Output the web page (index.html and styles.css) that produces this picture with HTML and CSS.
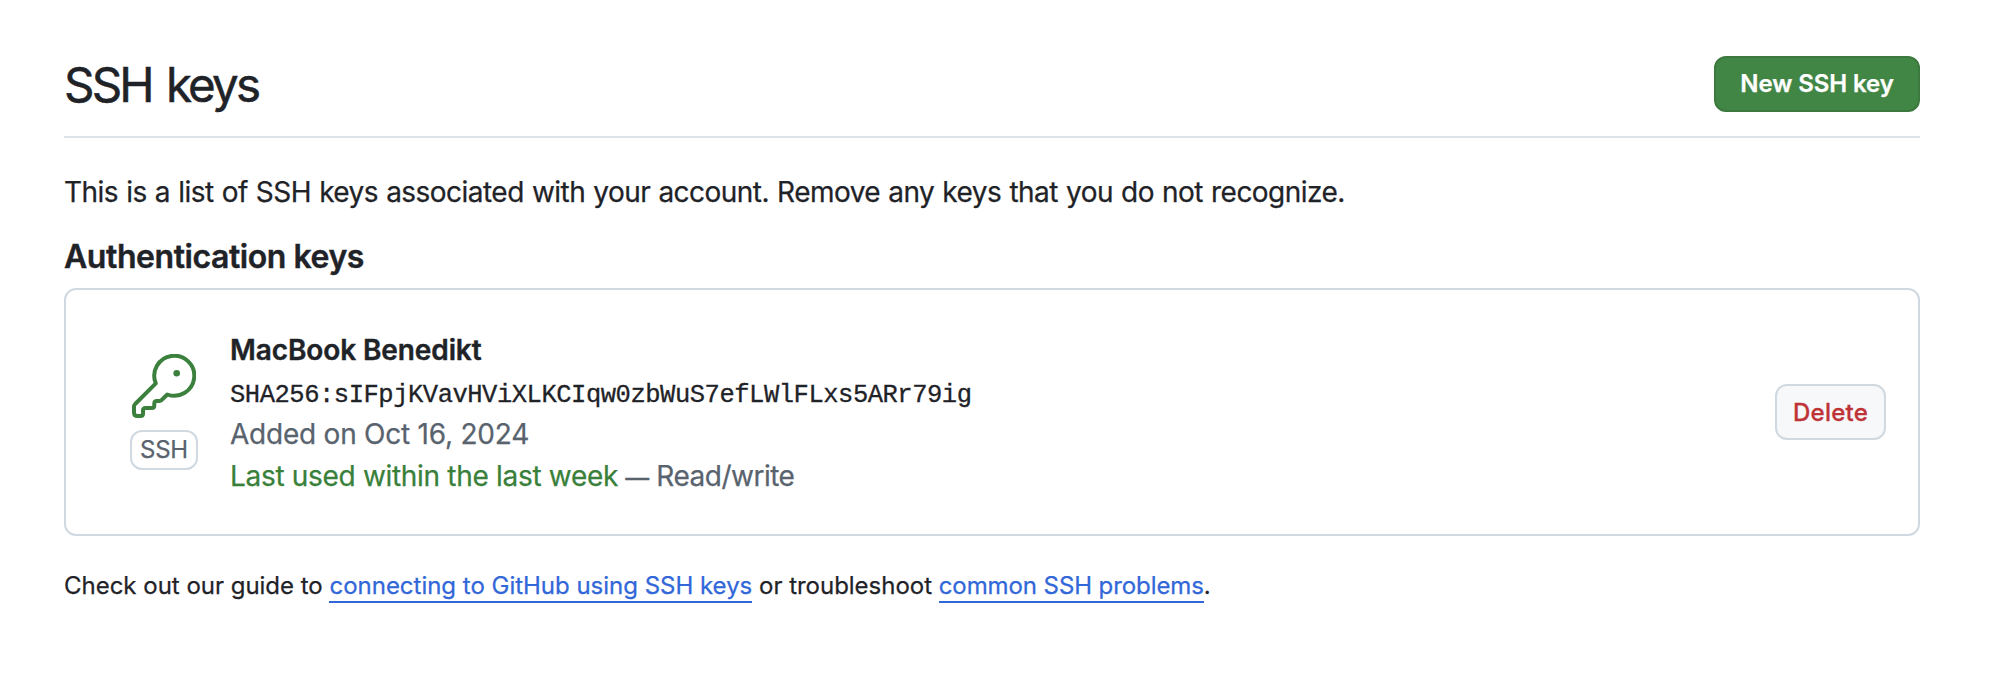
FILE: index.html
```html
<!DOCTYPE html>
<html lang="en">
<head>
<meta charset="utf-8">
<title>SSH keys</title>
<link rel="stylesheet" href="styles.css">
</head>
<body>
<main class="page">
  <header class="subhead">
    <h1 class="subhead-title">SSH keys</h1>
    <button class="btn btn-primary">New SSH key</button>
  </header>
  <p class="intro">This is a list of SSH keys associated with your account. Remove any keys that you do not recognize.</p>
  <h2 class="section-title">Authentication keys</h2>
  <section class="key-card">
    <div class="key-kind">
      <svg class="key-icon" viewBox="0 0 64 64" fill="none" aria-hidden="true">
        <path d="M23.8 29.4 3.2 50a3 3 0 0 0-1.2 2.3V58.500q0 3.500 3.500 3.500H8.500q2.500 0 2.500-2.500V56.500q0-2.500 2.500-2.500H19.800q2.500 0 2.500-2.500V49.500q0-2.500 2.500-2.500H27.500q1.200 0 2-.8L35.300 40.500A20 20 0 1 0 23.800 29.400Z" stroke="currentColor" stroke-width="4" stroke-linejoin="round"/>
        <circle cx="44.700" cy="19.200" r="3.300" fill="currentColor"/>
      </svg>
      <span class="key-label">SSH</span>
    </div>
    <div class="key-details">
      <strong class="key-name">MacBook Benedikt</strong>
      <code class="key-hash">SHA256:sIFpjKVavHViXLKCIqw0zbWuS7efLWlFLxs5ARr79ig</code>
      <span class="key-meta key-added">Added on Oct 16, 2024</span>
      <span class="key-meta key-usage"><span class="key-recent">Last used within the last week</span> <span class="dash">—</span> <span class="access">Read/write</span></span>
    </div>
    <button class="btn btn-danger">Delete</button>
  </section>
  <p class="help">Check out our guide to <a class="help-link" href="#">connecting to GitHub using SSH keys</a> or troubleshoot <a class="help-link help-link-problems" href="#">common SSH problems</a>.</p>
</main>
</body>
</html>
```
FILE: styles.css
```css
*{box-sizing:border-box}
body{margin:0;background:#fff;color:#1f2328;font-family:Inter,"Noto Sans",sans-serif;font-size:28px;font-weight:400;line-height:42px;-webkit-text-stroke:.25px}
.page{padding:56px 86px 0 64px}
h1,h2,p{margin:0}
.subhead{display:flex;justify-content:space-between;height:82px;border-bottom:2px solid #dee3e8}
.subhead-title{font-size:47.5px;font-weight:400;line-height:58px;letter-spacing:-2.8px;word-spacing:3.5px;-webkit-text-stroke:.5px}
.btn{height:56px;border-radius:12px;border:2px solid;font:500 24px/40px Inter,sans-serif;padding:0;display:flex;align-items:center;justify-content:center;white-space:nowrap}
.btn-primary{width:206px;background:#428646;border-color:#3b793f;color:#fff;font-weight:600;letter-spacing:-.08px}
.btn-danger{width:111px;background:#f6f8fa;border-color:#d1d9e0;color:#bf3336;margin-left:auto;padding-top:2px;letter-spacing:.234px;-webkit-text-stroke:.3px}
.intro{margin-top:33px;letter-spacing:-.535px;word-spacing:.8px}
.section-title{font-size:32px;font-weight:600;line-height:48px;margin-top:20px;letter-spacing:-.44px;-webkit-text-stroke:.4px}
.key-card{display:flex;align-items:center;height:248px;border:2px solid #d1d9e0;border-radius:12px;padding:0 32px 0 64px;margin-top:7px}
.key-kind{display:flex;flex-direction:column;align-items:center;gap:12px;width:68px}
.key-icon{width:64px;height:64px;color:#3b803d}
.key-label{width:68px;height:40px;border:2px solid #d1d9e0;border-radius:12px;font-size:24px;line-height:36px;letter-spacing:-.2px;text-align:center;color:#59636e}
.key-details{display:flex;flex-direction:column;margin-left:32px;padding-top:4px;white-space:nowrap}
.key-name{font-weight:600;letter-spacing:-.1px;-webkit-text-stroke:.4px}
.key-hash{height:42px;line-height:50px;font-family:"Liberation Mono",monospace;font-size:25.5px;letter-spacing:-.472px;-webkit-text-stroke:.3px}
.key-meta{color:#59636e}
.key-added{letter-spacing:-.23px}
.key-usage{letter-spacing:-.311px}
.key-recent{color:#39803a}
.dash{font-size:23.5px;-webkit-text-stroke:.6px}
.access{letter-spacing:-.5px}
.help{font-size:24px;line-height:36px;letter-spacing:-.015px;margin-top:32px;white-space:pre}
.help-link{color:#3167d8;text-decoration:none;border-bottom:2px solid #3167d8;padding-bottom:1px}
.help-link-problems{letter-spacing:-.09px}
```
